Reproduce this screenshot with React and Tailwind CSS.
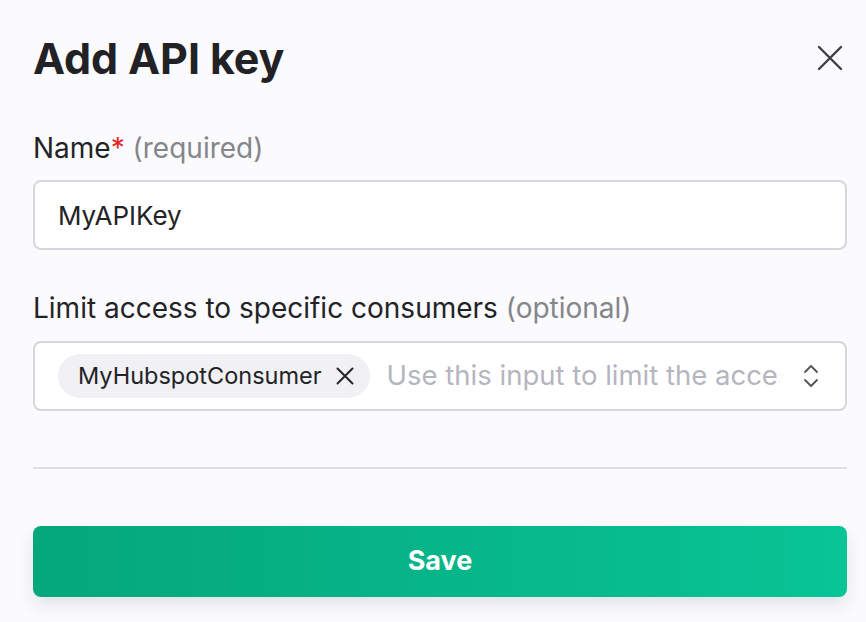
import React from "react";

function CloseIcon() {
  return (
    <svg width="26" height="26" viewBox="0 0 26 26" fill="none">
      <path d="M2 2L24 24M24 2L2 24" stroke="#3f3f46" strokeWidth="2.4" strokeLinecap="round" />
    </svg>
  );
}

function ChipX() {
  return (
    <svg width="18" height="18" viewBox="0 0 18 18" fill="none">
      <path d="M1.5 1.5L16.5 16.5M16.5 1.5L1.5 16.5" stroke="#27272a" strokeWidth="2" strokeLinecap="round" />
    </svg>
  );
}

function UpDown() {
  return (
    <svg width="18" height="26" viewBox="0 0 18 26" fill="none">
      <path d="M3 9L9 3L15 9M3 17L9 23L15 17" stroke="#52525b" strokeWidth="1.8" strokeLinecap="round" strokeLinejoin="round" />
    </svg>
  );
}

export default function App() {
  return (
    <div
      className="min-h-[622px] bg-[#fbfbfe] pl-[33px] pr-[19px] pt-[30px] text-[#232326]"
      style={{ fontFamily: "Inter, 'Noto Sans', sans-serif" }}
    >
      {/* Header */}
      <div className="flex h-[56px] items-center justify-between">
        <h1 className="text-[43px] font-bold tracking-[-0.1px] text-[#222226]">Add API key</h1>
        <button className="mr-[4px] flex items-center">
          <CloseIcon />
        </button>
      </div>

      {/* Name */}
      <label className="mt-[45px] block text-[28px] leading-[34px]">
        Name<span className="text-[#e5252a]">*</span>{" "}
        <span className="text-[#85858c]">(required)</span>
      </label>
      <div className="mt-[15px] flex h-[70px] items-center rounded-[8px] border-2 border-[#d6d6df] bg-white px-[23px] text-[26px]">
        MyAPIKey
      </div>

      {/* Consumers */}
      <label className="mt-[41px] block text-[28px] leading-[34px]">
        Limit access to specific consumers{" "}
        <span className="text-[#85858c]">(optional)</span>
      </label>
      <div className="mt-[16px] flex h-[70px] items-center rounded-[8px] border-2 border-[#d6d6df] bg-white pl-[23px] pr-[25px]">
        <div className="flex h-[44px] shrink-0 items-center gap-[14px] rounded-full bg-[#f0f0f5] pl-[20px] pr-[16px] text-[23.5px]">
          MyHubspotConsumer
          <ChipX />
        </div>
        <input
          className="ml-[17px] min-w-0 flex-1 bg-transparent text-[27.5px] outline-none placeholder:text-[#b5b5bf]"
          placeholder="Use this input to limit the access of this API key"
        />
        <div className="ml-[22px] flex shrink-0 items-center">
          <UpDown />
        </div>
      </div>

      {/* Divider */}
      <div className="mt-[56px] h-[2px] bg-[#dedee5]" />

      {/* Save */}
      <button className="mt-[57px] flex h-[71px] w-full items-center justify-center rounded-[8px] bg-gradient-to-r from-[#05a77b] to-[#08c496] text-[27px] font-bold text-white shadow-[0_8px_16px_rgba(40,40,80,0.12)]">
        Save
      </button>
    </div>
  );
}
